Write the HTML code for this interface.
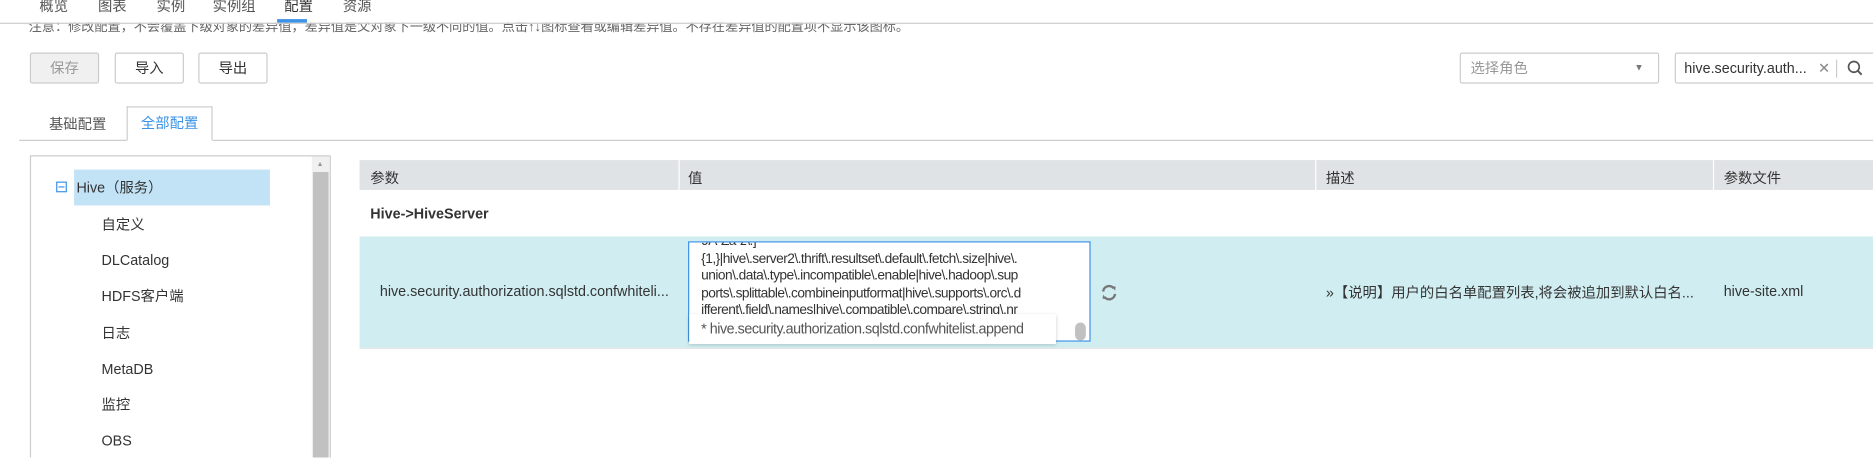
<!DOCTYPE html>
<html><head><meta charset="utf-8"><style>
html,body{margin:0;width:1873px;height:458px;overflow:hidden;background:#fff;font-family:"Liberation Sans","Noto Sans CJK SC",sans-serif;}
#w{position:absolute;left:0;top:0;width:1568px;height:383px;transform:scale(1.19452);transform-origin:0 0;color:#333;font-size:12px;overflow:hidden}
.a{position:absolute;white-space:nowrap;}
.btn{position:absolute;top:44px;height:26px;border:1px solid #ccc;border-radius:2px;box-sizing:border-box;text-align:center;line-height:24px;font-size:12px;background:#fff;}
.ti{position:absolute;left:85px;font-size:12px;line-height:14px;}
</style></head><body><div id="w">
<div class="a" style="top:14px;left:24px;font-size:11px;color:#666;">注意：修改配置，不会覆盖下级对象的差异值，差异值是父对象下一级不同的值。点击↑↓图标查看或编辑差异值。不存在差异值的配置项不显示该图标。</div>
<div class="a" style="top:0;left:0;width:1568px;height:19px;background:#fff;"></div>
<div class="a" style="top:-4px;left:33px;color:#555">概览</div>
<div class="a" style="top:-4px;left:82px;color:#555">图表</div>
<div class="a" style="top:-4px;left:131px;color:#555">实例</div>
<div class="a" style="top:-4px;left:178px;color:#555">实例组</div>
<div class="a" style="top:-4px;left:238px;color:#333">配置</div>
<div class="a" style="top:-4px;left:287px;color:#555">资源</div>
<div class="a" style="top:16px;left:232px;width:25px;height:3px;background:#3b92e6"></div>
<div class="a" style="top:19px;left:0;width:1568px;height:1px;background:#ccc"></div>
<div class="btn" style="left:25px;width:58px;background:#f0f0f0;color:#999">保存</div>
<div class="btn" style="left:96px;width:58px">导入</div>
<div class="btn" style="left:166px;width:58px">导出</div>
<div class="btn" style="left:1222px;width:167px;text-align:left;padding-left:8px;color:#999">选择角色<span style="position:absolute;right:12px;font-size:8px;color:#777">▼</span></div>
<div class="btn" style="left:1402px;width:170px;text-align:left;padding-left:7px;color:#333">hive.security.auth...<span style="position:absolute;left:119px;color:#888">✕</span><span style="position:absolute;left:134px;top:5px;width:1px;height:15px;background:#ccc"></span>
<svg style="position:absolute;left:143px;top:5px" width="14" height="14" viewBox="0 0 14 14"><circle cx="6" cy="6" r="4.5" fill="none" stroke="#555" stroke-width="1.4"/><path d="M9.3 9.3L12.5 12.5" stroke="#555" stroke-width="1.6"/></svg></div>
<div class="a" style="top:117px;left:16px;width:1552px;height:1px;background:#ccc"></div>
<div class="a" style="top:95px;left:41px;color:#555">基础配置</div>
<div class="a" style="top:89px;left:106px;width:72px;height:29px;border:1px solid #ccc;border-bottom:1px solid #fff;background:#fff;box-sizing:border-box;text-align:center;line-height:27px;color:#3b92e6">全部配置</div>
<div class="a" style="top:130px;left:25px;width:252px;height:270px;border:1px solid #ccc;box-sizing:border-box"></div>
<div class="a" style="top:131px;left:261px;width:15px;height:260px;background:#f0f0f0"></div>
<div class="a" style="top:144px;left:262px;width:13px;height:250px;background:#c1c1c1"></div>
<div class="a" style="top:135px;left:265px;font-size:6px;color:#999">▲</div>
<div class="a" style="top:142px;left:62px;width:164px;height:30px;background:#c2e3f5"></div>
<div class="a" style="top:152px;left:47px;width:9px;height:9px;border:1px solid #3b92e6;box-sizing:border-box"><div style="position:absolute;left:1px;top:3px;width:5px;height:1px;background:#3b92e6"></div></div>
<div class="a" style="top:150px;left:64px;line-height:14px">Hive（服务）</div>
<div class="ti a" style="top:181px">自定义</div>
<div class="ti a" style="top:211px">DLCatalog</div>
<div class="ti a" style="top:241px">HDFS客户端</div>
<div class="ti a" style="top:272px">日志</div>
<div class="ti a" style="top:302px">MetaDB</div>
<div class="ti a" style="top:332px">监控</div>
<div class="ti a" style="top:362px">OBS</div>
<div class="a" style="top:134px;left:301px;width:1267px;height:25px;background:#e0e3e5"></div>
<div class="a" style="top:134px;left:568px;width:1px;height:25px;background:#fff"></div>
<div class="a" style="top:134px;left:1101px;width:1px;height:25px;background:#fff"></div>
<div class="a" style="top:134px;left:1434px;width:1px;height:25px;background:#fff"></div>
<div class="a" style="top:140px;left:310px">参数</div>
<div class="a" style="top:140px;left:576px">值</div>
<div class="a" style="top:140px;left:1110px">描述</div>
<div class="a" style="top:140px;left:1443px">参数文件</div>
<div class="a" style="top:172px;left:310px;font-weight:bold">Hive-&gt;HiveServer</div>
<div class="a" style="top:198px;left:301px;width:1267px;height:93px;background:#d0eef2;border-bottom:1px solid #e4e4e4"></div>
<div class="a" style="top:237px;left:318px">hive.security.authorization.sqlstd.confwhiteli...</div>
<div class="a" style="top:202px;left:576px;width:337px;height:84px;border:1px solid #3b92e6;background:#fff;box-sizing:border-box;overflow:hidden">
<div style="position:absolute;top:-8px;left:10px;width:320px;font-size:11.5px;line-height:14.5px;color:#333;letter-spacing:-0.45px">9A-Za-z\.]<br>{1,}|hive\.server2\.thrift\.resultset\.default\.fetch\.size|hive\.<br>union\.data\.type\.incompatible\.enable|hive\.hadoop\.sup<br>ports\.splittable\.combineinputformat|hive\.supports\.orc\.d<br>ifferent\.field\.names|hive\.compatible\.compare\.string\.nr</div>
<div style="position:absolute;right:3px;top:67px;width:9px;height:15px;border-radius:5px;background:#c1c1c1"></div></div>
<div class="a" style="top:263px;left:577px;width:307px;height:25px;background:#fff;box-shadow:0 1px 3px rgba(0,0,0,.2);line-height:25px;padding-left:10px;box-sizing:border-box;color:#555;letter-spacing:-0.4px">* hive.security.authorization.sqlstd.confwhitelist.append</div>
<svg class="a" style="top:237px;left:921px" width="15" height="16" viewBox="0 0 15 16"><path d="M2.5 7A5 5 0 0 1 11.5 4.5M12.5 9A5 5 0 0 1 3.5 11.5" fill="none" stroke="#777" stroke-width="2"/><path d="M10 2.5L13 3L12.5 6.5Z M5 13.5L2 13L2.5 9.5Z" fill="#777"/></svg>
<div class="a" style="top:236px;left:1110px">»【说明】用户的白名单配置列表,将会被追加到默认白名...</div>
<div class="a" style="top:237px;left:1443px">hive-site.xml</div>
</div></body></html>
